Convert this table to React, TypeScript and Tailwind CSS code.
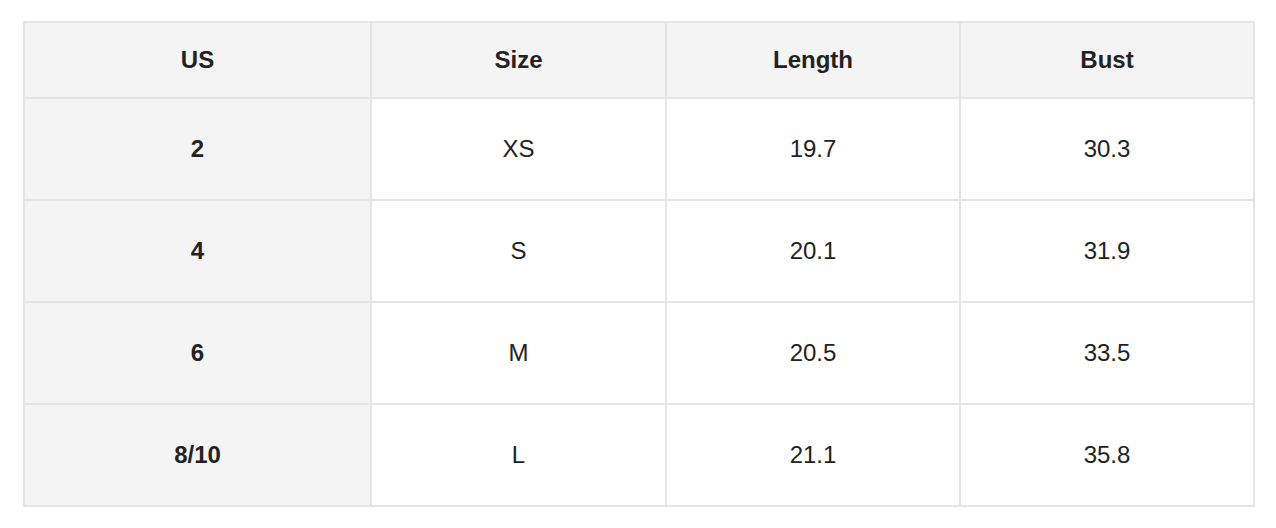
const HEADERS = ["US", "Size", "Length", "Bust"];

const ROWS = [
  ["2", "XS", "19.7", "30.3"],
  ["4", "S", "20.1", "31.9"],
  ["6", "M", "20.5", "33.5"],
  ["8/10", "L", "21.1", "35.8"],
];

export default function App() {
  return (
    <div className="min-h-screen bg-white pl-[23px] pt-[21px] font-['Liberation_Sans',Arial,sans-serif] text-[24px] text-[#222]">
      <div className="grid w-[1232px] grid-cols-[345px_293px_292px_292px] gap-[2px] bg-[#e5e5e5] p-[2px]">
        {/* header */}
        {HEADERS.map((h) => (
          <div key={h} className="flex h-[74px] items-center justify-center bg-[#f4f4f4] font-bold">
            {h}
          </div>
        ))}

        {/* body */}
        {ROWS.map((row) =>
          row.map((cell, i) => (
            <div
              key={row[0] + i}
              className={
                i === 0
                  ? "flex h-[100px] items-center justify-center bg-[#f4f4f4] font-bold"
                  : "flex h-[100px] items-center justify-center bg-white"
              }
            >
              {cell}
            </div>
          ))
        )}
      </div>
    </div>
  );
}
